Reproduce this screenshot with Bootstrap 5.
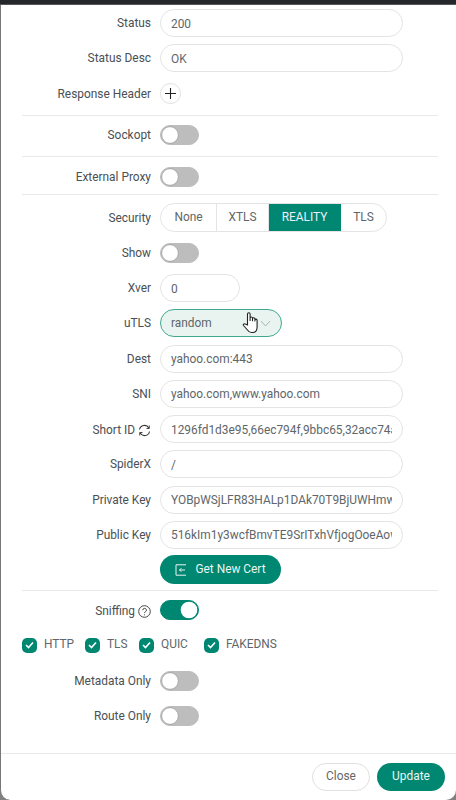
<!DOCTYPE html>
<html lang="en"><head><meta charset="utf-8">
<link href="https://cdn.jsdelivr.net/npm/bootstrap@5.3.0/dist/css/bootstrap.min.css" rel="stylesheet">
<style>
:root{--accent:#008771;--txt:#3c4043;--line:#e6e6e6}
html,body{height:800px;overflow:hidden}
body{background:#808080;font-family:"Roboto","Liberation Sans",sans-serif;font-size:11.9px;color:var(--txt)}
.topband{height:4px;background:#26272b;border-bottom:1px solid #55565a;box-sizing:content-box}
.sheet{height:795px;background:#fff;border-left:1px solid #777;border-bottom-left-radius:10px;border-bottom-right-radius:10px;display:flex;flex-direction:column;position:relative}
.sheet-body{flex:1;padding:4px 18px 0 21px}
.frow{display:flex;align-items:center;height:28px;margin-bottom:7.25px}
.flabel{width:129px;text-align:right;margin-right:9px;padding-top:2px;flex:none;white-space:nowrap;color:#4a5054;line-height:1}
.flabel svg{vertical-align:-3px}
.pill{width:243px;height:28px;border:1px solid #e4e4e4;border-radius:14px;padding:1px 10px 0;font-size:11.9px;color:#60666a;box-shadow:none;background:#fff;font-family:inherit;min-height:0}
.pill.sm{width:80px}
.rule{height:1px;background:#e9e9e9;margin:0;border:0;opacity:1}
.after-head{margin-top:-.25px}
.pad-a{margin-top:5px;margin-bottom:7px}
.pad-b{margin-top:6px;margin-bottom:3px}
.gap-sec{margin-bottom:9px}
.round-add{width:21px;height:21px;padding:0;border:1px solid #e0e0e0;border-radius:50%;background:#fff;display:flex;align-items:center;justify-content:center}
.form-switch.tog{padding:0;margin:0;min-height:0;display:flex}
.form-switch.tog .form-check-input{width:39px;height:20px;margin:0;background-color:#bdbdbd;border:1px solid #bdbdbd;border-radius:10px;box-shadow:none;background-position:left center;background-size:auto 100%;background-image:url("data:image/svg+xml,<svg xmlns='http://www.w3.org/2000/svg' viewBox='-4 -4 8 8'><circle r='3.7' fill='white' stroke='%23888' stroke-width='.25'/></svg>")}
.form-switch.tog .form-check-input:checked{background-color:var(--accent);border-color:var(--accent);background-position:right center;background-image:url("data:image/svg+xml,<svg xmlns='http://www.w3.org/2000/svg' viewBox='-4 -4 8 8'><circle r='3.7' fill='white'/></svg>")}
.seg{display:inline-flex;height:29px;border:1px solid #e4e4e4;border-radius:15px;overflow:hidden}
.seg span{display:flex;align-items:center;justify-content:center;height:100%;padding-top:1px;border-right:1px solid #e4e4e4;color:#60666a}
.seg span:last-child{border-right:0}
.seg .s1{width:56px}.seg .s2{width:52px}.seg .s3{width:72px;background:var(--accent);color:#eef;border-color:var(--accent)}.seg .s4{width:45px}
.picker{width:122px;height:28px;border:1px solid #3fa890;border-radius:14px;background:#e9f4f1;padding:1px 10px 0;display:flex;align-items:center;justify-content:space-between;color:#60666a;position:relative}
.hand{position:absolute;left:81px;top:1px}
.cta{background:var(--accent);color:#eaf5f2;border:0;border-radius:15px;font-size:11.9px;height:29px;padding:0;display:flex;align-items:center;justify-content:center;font-family:inherit}
.cta:hover{background:var(--accent);color:#eaf5f2}
.cert{width:121px;gap:8px;margin-left:138px;margin-top:-1px;margin-bottom:6px}
.after-cert{margin-bottom:5px}
.checks{display:flex;align-items:center;height:28px;margin-bottom:7.25px;color:#60666a}
.chk{display:flex;align-items:center;gap:7px}
.c1{width:63px}.c2{width:54px}.c3{width:65px}
.box{width:15px;height:15px;border-radius:5px;background:var(--accent);display:flex;align-items:center;justify-content:center}
.sheet-foot{height:47px;border-top:1px solid #e9e9e9;display:flex;align-items:center;justify-content:flex-end;gap:7px;padding-right:11px;flex:none}
.ghost{width:58px;height:28px;border:1px solid #e0e0e0;background:#fff;border-radius:14px;color:#666;font-size:11.9px;padding:0;font-family:inherit}
.upd{width:68px;height:28px}
</style></head><body>
<div class="topband"></div>
<div class="sheet">
<div class="sheet-body">
<div class="frow"><div class="flabel">Status</div><input class="form-control pill" value="200"></div>
<div class="frow"><div class="flabel">Status Desc</div><input class="form-control pill" value="OK"></div>
<div class="frow"><div class="flabel">Response Header</div><button class="round-add" aria-label="Add"><svg width="11" height="11" viewBox="0 0 11 11"><path d="M5.5 0v11M0 5.5h11" stroke="#222" stroke-width="1.1"/></svg></button></div>
<hr class="rule after-head">
<div class="frow pad-a"><div class="flabel">Sockopt</div><div class="form-check form-switch tog"><input class="form-check-input" type="checkbox" role="switch"></div></div>
<hr class="rule">
<div class="frow pad-b"><div class="flabel">External Proxy</div><div class="form-check form-switch tog"><input class="form-check-input" type="checkbox" role="switch"></div></div>
<hr class="rule gap-sec">
<div class="frow"><div class="flabel">Security</div><div class="seg"><span class="s1">None</span><span class="s2">XTLS</span><span class="s3">REALITY</span><span class="s4">TLS</span></div></div>
<div class="frow"><div class="flabel">Show</div><div class="form-check form-switch tog"><input class="form-check-input" type="checkbox" role="switch"></div></div>
<div class="frow"><div class="flabel">Xver</div><input class="form-control pill sm" value="0"></div>
<div class="frow"><div class="flabel">uTLS</div><div class="picker"><span>random</span><svg width="11" height="7" viewBox="0 0 11 7"><path d="M1 1l4.5 5L10 1" fill="none" stroke="#a9b5b1" stroke-width="1"/></svg>
<svg class="hand" width="17" height="23" viewBox="0 0 17 23"><path d="M5.5 14V3a1.3 1.3 0 0 1 2.6 0v6.5V7.2a1.2 1.2 0 0 1 2.4 0v2.6V8a1.2 1.2 0 0 1 2.4 0v2V9.2a1.1 1.1 0 0 1 2.2 0V16c0 3-1.600 5.500-4.500 5.500H9.500c-2 0-3-1-4-2.500L1.500 14.500c-.7-1 .6-2.300 1.700-1.500z" fill="#fff" stroke="#222" stroke-width="1.100" stroke-linejoin="round"/></svg></div></div>
<div class="frow"><div class="flabel">Dest</div><input class="form-control pill" value="yahoo.com:443"></div>
<div class="frow"><div class="flabel">SNI</div><input class="form-control pill" value="yahoo.com,www.yahoo.com"></div>
<div class="frow"><div class="flabel">Short ID <svg width="13" height="13" viewBox="0 0 13 13" fill="none" stroke="#333" stroke-width="1.100"><path d="M1.500 5.500A5 5 0 0 1 10.800 4M11.500 7.500A5 5 0 0 1 2.200 9"/><path d="M11.300 1.500v3H8.500M1.700 11.500v-3H4.500" stroke-width=".9"/></svg></div><input class="form-control pill" value="1296fd1d3e95,66ec794f,9bbc65,32acc74a1ee5"></div>
<div class="frow"><div class="flabel">SpiderX</div><input class="form-control pill" value="/"></div>
<div class="frow"><div class="flabel">Private Key</div><input class="form-control pill" value="YOBpWSjLFR83HALp1DAk70T9BjUWHmwQxkLnT2"></div>
<div class="frow"><div class="flabel">Public Key</div><input class="form-control pill" value="516kIm1y3wcfBmvTE9SrITxhVfjogOoeAowQ7H"></div>
<button class="btn cta cert"><svg width="12" height="12" viewBox="0 0 12 12" fill="none" stroke="#eaf5f2" stroke-width="1"><path d="M11 .8H1v10.400h10M10 6H4.500M6.300 4.200L4.500 6l1.800 1.800"/></svg>Get New Cert</button>
<hr class="rule after-cert">
<div class="frow"><div class="flabel">Sniffing <svg width="13" height="13" viewBox="0 0 13 13" fill="none" stroke="#333"><circle cx="6.500" cy="6.500" r="5.800" stroke-width=".9"/><path d="M4.800 5.200a1.800 1.800 0 1 1 2.500 1.600c-.6.300-.8.600-.8 1.200" stroke-width=".9"/><circle cx="6.500" cy="9.700" r=".55" fill="#333" stroke="none"/></svg></div><div class="form-check form-switch tog"><input class="form-check-input" type="checkbox" role="switch" checked></div></div>
<div class="checks"><div class="chk c1"><span class="box"><svg width="9" height="8" viewBox="0 0 9 8"><path d="M1 4l2.500 2.500L8 1.500" fill="none" stroke="#fff" stroke-width="1.600"/></svg></span>HTTP</div><div class="chk c2"><span class="box"><svg width="9" height="8" viewBox="0 0 9 8"><path d="M1 4l2.500 2.500L8 1.500" fill="none" stroke="#fff" stroke-width="1.600"/></svg></span>TLS</div><div class="chk c3"><span class="box"><svg width="9" height="8" viewBox="0 0 9 8"><path d="M1 4l2.500 2.500L8 1.500" fill="none" stroke="#fff" stroke-width="1.600"/></svg></span>QUIC</div><div class="chk"><span class="box"><svg width="9" height="8" viewBox="0 0 9 8"><path d="M1 4l2.500 2.500L8 1.500" fill="none" stroke="#fff" stroke-width="1.600"/></svg></span>FAKEDNS</div></div>
<div class="frow"><div class="flabel">Metadata Only</div><div class="form-check form-switch tog"><input class="form-check-input" type="checkbox" role="switch"></div></div>
<div class="frow"><div class="flabel">Route Only</div><div class="form-check form-switch tog"><input class="form-check-input" type="checkbox" role="switch"></div></div>
</div>
<div class="sheet-foot"><button class="ghost">Close</button><button class="btn cta upd">Update</button></div>
</div>
<script src="https://cdn.jsdelivr.net/npm/bootstrap@5.3.0/dist/js/bootstrap.bundle.min.js"></script>
</body></html>
